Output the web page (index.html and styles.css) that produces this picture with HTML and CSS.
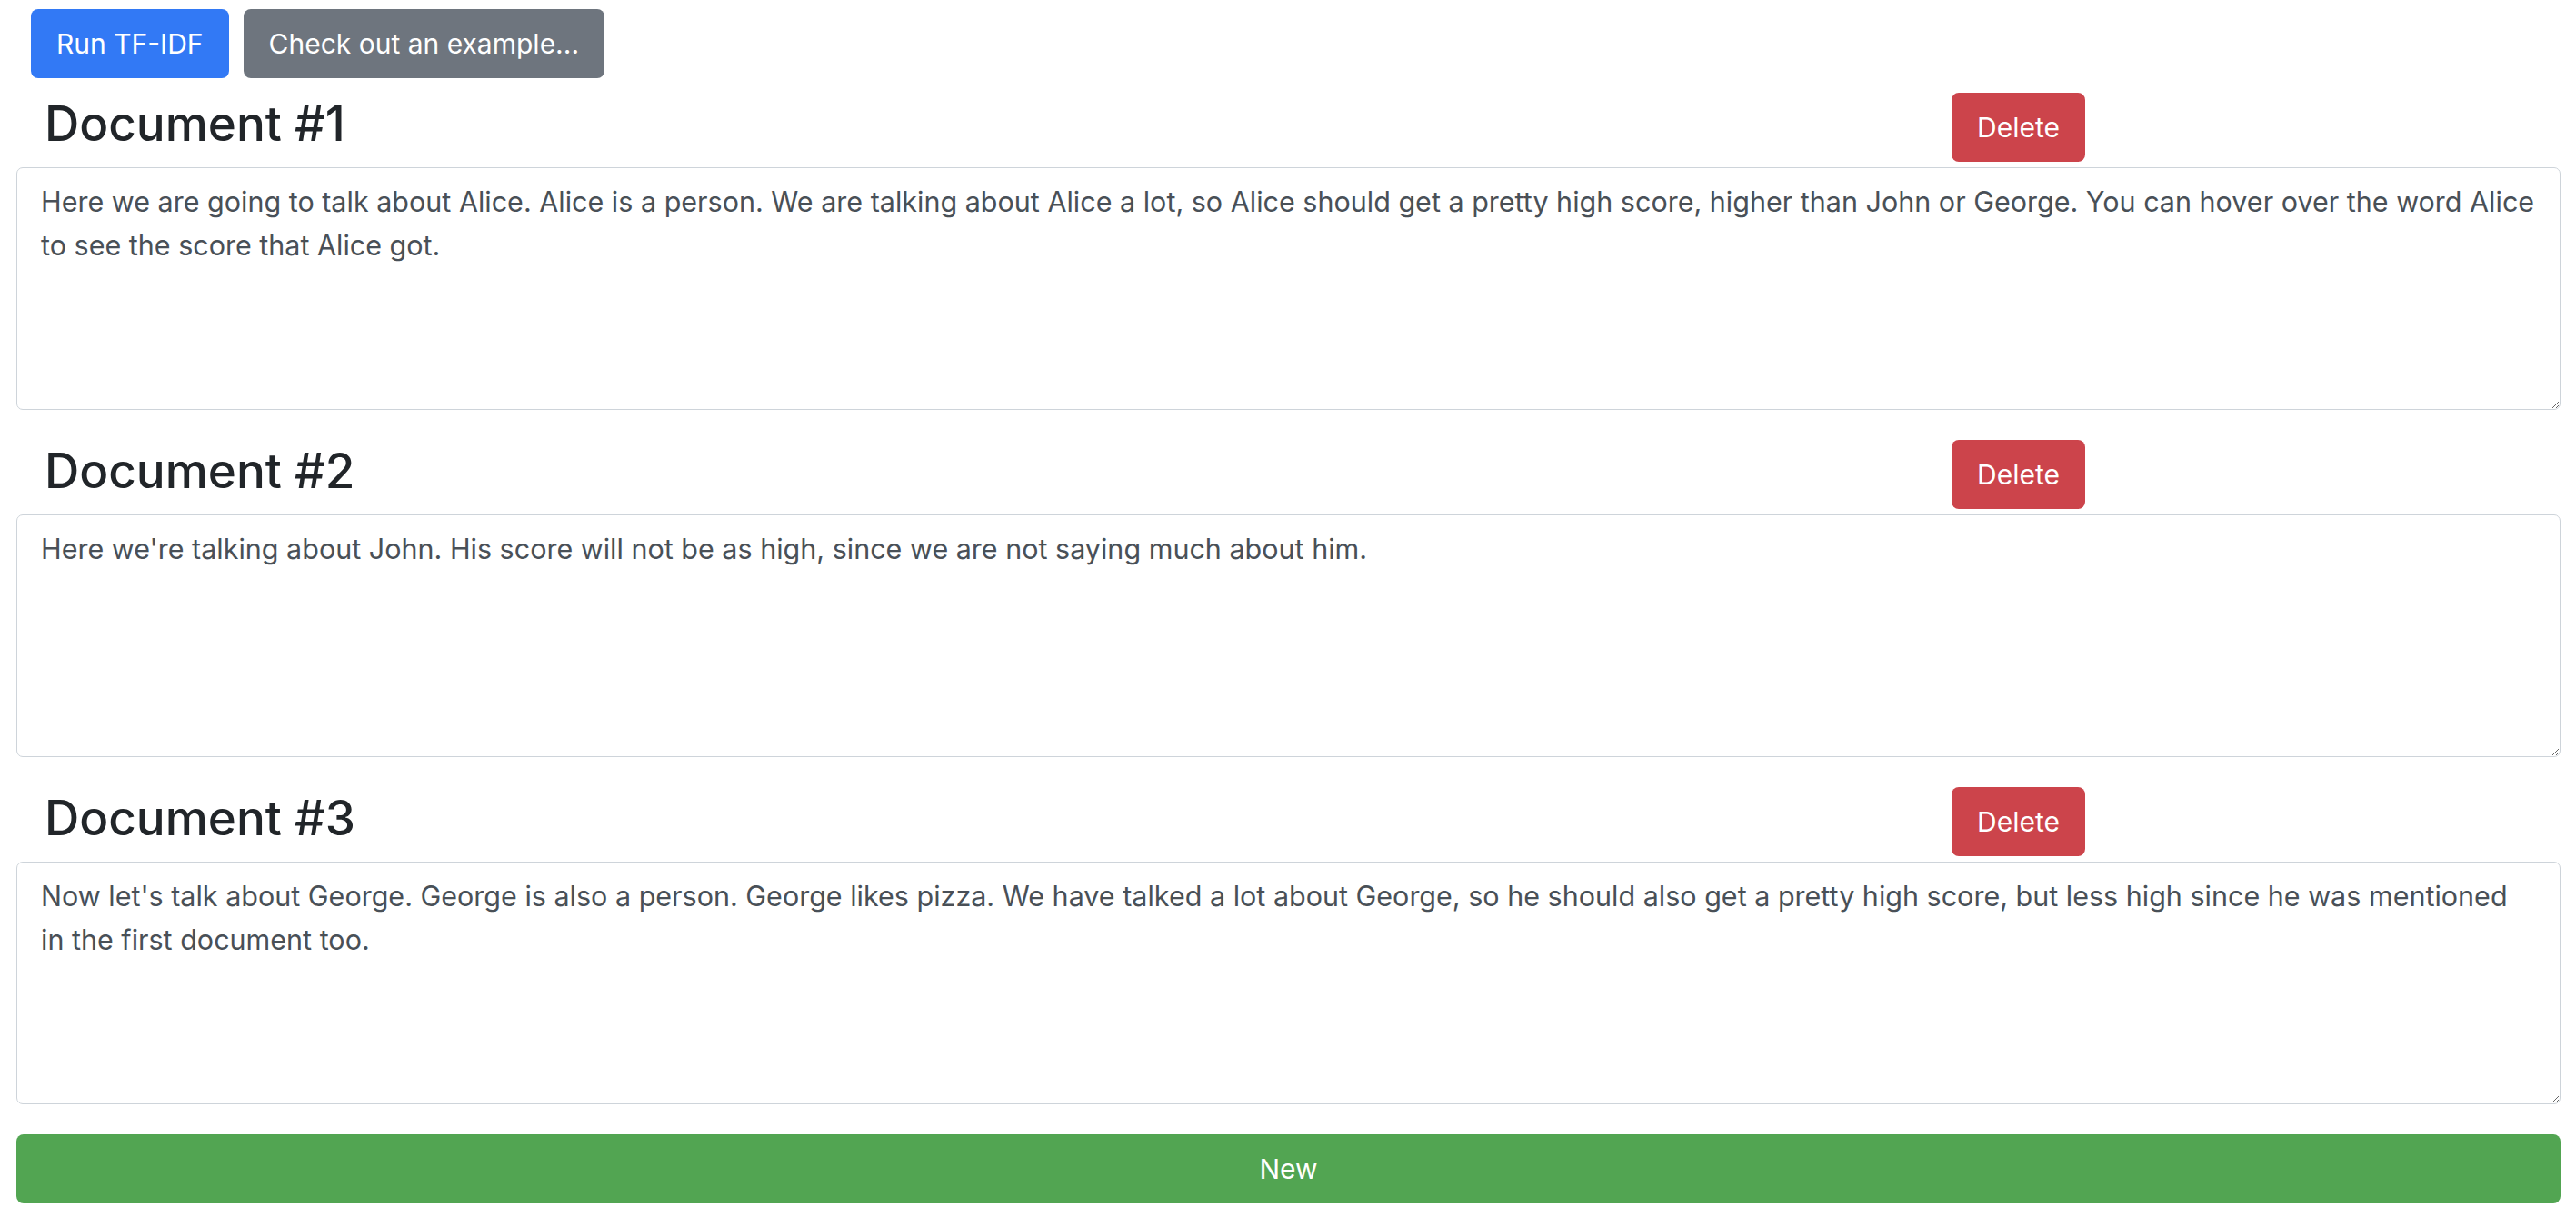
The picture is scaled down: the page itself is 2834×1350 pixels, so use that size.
FILE: index.html
```html
<!DOCTYPE html>
<html lang="en">

<head>
    <meta charset="UTF-8">
    <meta name="viewport" content="width=device-width, initial-scale=1.0">
    <title>TF-IDF</title>
    <link rel="stylesheet" href="styles.css">
</head>

<body>
    <div class="toolbar">
        <button class="btn btn-blue">Run TF-IDF</button>
        <button class="btn btn-gray">Check out an example...</button>
    </div>

    <div class="doc">
        <div class="doc-head">
            <h2>Document #1</h2>
            <button class="btn btn-red">Delete</button>
        </div>
        <textarea class="doc-text">Here we are going to talk about Alice. Alice is a person. We are talking about Alice a lot, so Alice should get a pretty high score, higher than John or George. You can hover over the word Alice to see the score that Alice got.</textarea>
    </div>

    <div class="doc">
        <div class="doc-head">
            <h2>Document #2</h2>
            <button class="btn btn-red">Delete</button>
        </div>
        <textarea class="doc-text">Here we're talking about John. His score will not be as high, since we are not saying much about him.</textarea>
    </div>

    <div class="doc">
        <div class="doc-head">
            <h2>Document #3</h2>
            <button class="btn btn-red">Delete</button>
        </div>
        <textarea class="doc-text">Now let's talk about George. George is also a person. George likes pizza. We have talked a lot about George, so he should also get a pretty high score, but less high since he was mentioned in the first document too.</textarea>
    </div>

    <button class="btn btn-green btn-block">New</button>
</body>

</html>
```

FILE: styles.css
```css
* {
    box-sizing: border-box;
}

body {
    margin: 0;
    padding: 10px 17px 0 18px;
    font-family: Inter, "Noto Sans", sans-serif;
    font-size: 30px;
    line-height: 48px;
    color: #212529;
    background: white;
}

/* botoes do topo */
.toolbar {
    display: flex;
    gap: 16px;
    padding-left: 16px;
    margin-bottom: 16px;
}

.btn {
    font-family: inherit;
    font-size: 30px;
    line-height: 48px;
    padding: 13px 27px;
    border: 1px solid transparent;
    border-radius: 8px;
    color: white;
    cursor: pointer;
}

.btn-blue {
    background-color: #3279f5;
}

.btn-gray {
    background-color: #6e757e;
}

.btn-red {
    background-color: #cc444b;
}

.btn-green {
    background-color: #52a552;
}

.btn-block {
    display: block;
    width: 100%;
}

.doc {
    margin-bottom: 33px;
}

.doc-head {
    display: flex;
    justify-content: space-between;
    align-items: flex-start;
    padding-left: 31px;
    padding-right: 523px;
    margin-bottom: 6px;
}

.doc-head h2 {
    margin: 3px 0 0;
    font-size: 53px;
    font-weight: 500;
    line-height: 1.2;
}

.doc-text {
    display: block;
    width: 100%;
    height: 267px;
    padding: 13px 26px;
    font-family: inherit;
    font-size: 30.5px;
    line-height: 48px;
    color: #495057;
    border: 1px solid #ced4da;
    border-radius: 7px;
}
```
